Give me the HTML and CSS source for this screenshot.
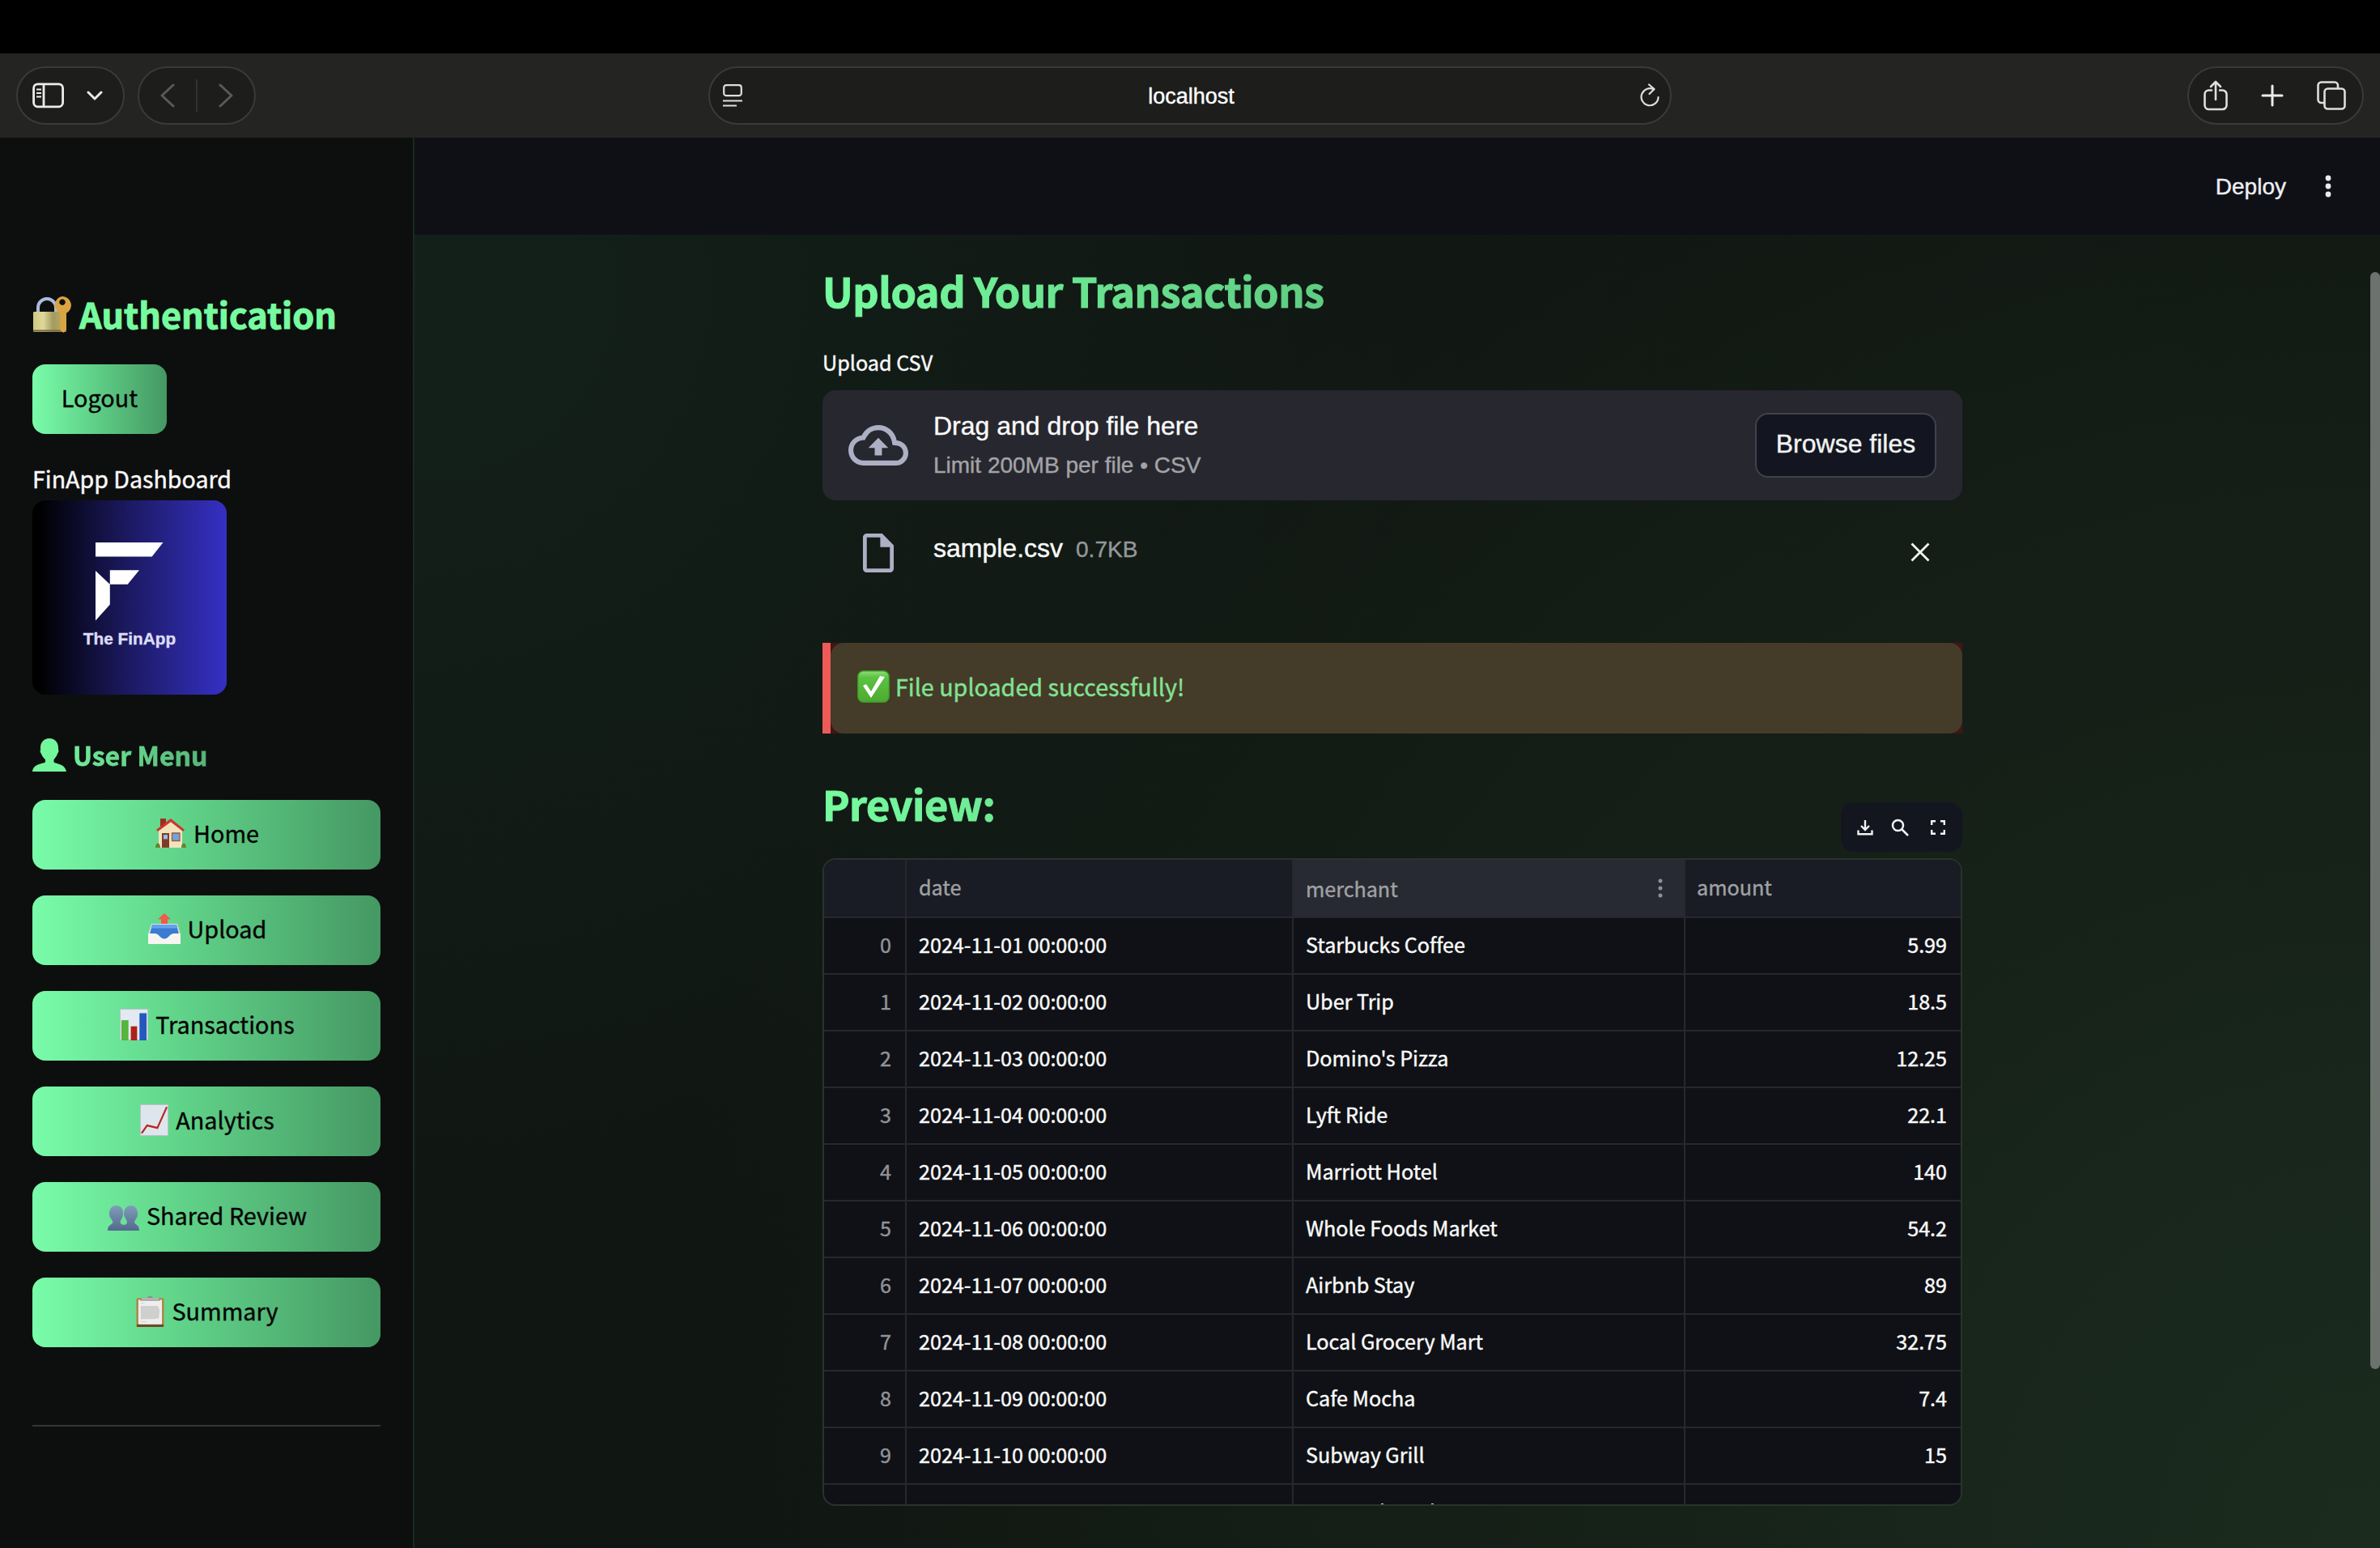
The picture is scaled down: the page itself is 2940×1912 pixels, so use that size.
FILE: index.html
```html
<!DOCTYPE html>
<html lang="en">
<head>
<meta charset="utf-8">
<title>FinApp</title>
<link rel="stylesheet" href="styles.css">
</head>
<body>
<div class="screen-top"></div>
<header class="browser">
  <div class="pill pill-side">
    <svg width="40" height="32" viewBox="0 0 40 32" fill="none" stroke="#ecebea" stroke-width="2.8"><rect x="1.6" y="1.8" width="36" height="28" rx="5"/><path d="M14 2v28"/><path d="M5 8.500h6M5 13h6M5 17.500h6" stroke-width="1.800"/></svg>
    <svg width="20" height="14" viewBox="0 0 20 14" fill="none" stroke="#ecebea" stroke-width="3" stroke-linecap="round" stroke-linejoin="round"><path d="M2 3l8 8 8-8"/></svg>
  </div>
  <div class="pill pill-nav">
    <svg width="18" height="30" viewBox="0 0 18 30" fill="none" stroke="#5a5a58" stroke-width="3" stroke-linecap="round" stroke-linejoin="round"><path d="M16 2L2 15l14 13"/></svg>
    <span class="nav-divider"></span>
    <svg width="18" height="30" viewBox="0 0 18 30" fill="none" stroke="#5a5a58" stroke-width="3" stroke-linecap="round" stroke-linejoin="round"><path d="M2 2l14 13L2 28"/></svg>
  </div>
  <div class="pill address">
    <svg width="24" height="28" viewBox="0 0 24 28" fill="none" stroke="#dededc" stroke-width="2.200"><rect x="1.200" y="1.200" width="21.600" height="13" rx="3"/><path d="M0 20.500h24M0 26.500h17"/></svg>
    <span class="address-text">localhost</span>
    <svg width="24" height="30" viewBox="0 0 24 30" fill="none" stroke="#dededc" stroke-width="2.200" stroke-linecap="round" stroke-linejoin="round"><path d="M17 7.500A10.500 10.500 0 1 0 22.500 17"/><path d="M11 1.500l6.500 5.500-6 6"/></svg>
  </div>
  <div class="pill pill-actions">
    <svg width="30" height="38" viewBox="0 0 30 38" fill="none" stroke="#dededc" stroke-width="2.600" stroke-linecap="round" stroke-linejoin="round"><path d="M10 12.500H6.500a5 5 0 0 0-5 5V31a5 5 0 0 0 5 5h17a5 5 0 0 0 5-5V17.500a5 5 0 0 0-5-5H20M15 24V2M9 8l6-6 6 6"/></svg>
    <svg width="28" height="28" viewBox="0 0 28 28" fill="none" stroke="#ecebea" stroke-width="3" stroke-linecap="round"><path d="M14 2v24M2 14h24"/></svg>
    <svg width="36" height="36" viewBox="0 0 36 36" fill="none" stroke="#dededc" stroke-width="2.600" stroke-linecap="round"><rect x="9.500" y="9.500" width="25" height="25" rx="4"/><path d="M9 27H5.500a4 4 0 0 1-4-4V5.500a4 4 0 0 1 4-4H22a4 4 0 0 1 4 4V9"/></svg>
  </div>
</header>
<div class="app">
  <aside class="sidebar">
    <h2 class="auth"><svg class="auth-icon" width="48" height="46" viewBox="0 0 48 46"><defs><linearGradient id="brass"><stop offset="0" stop-color="#cfc981"/><stop offset=".3" stop-color="#ded89a"/><stop offset=".6" stop-color="#a39a62"/><stop offset="1" stop-color="#c0b060"/></linearGradient></defs><path d="M7 22V14a11 11 0 0 1 22 0v8" fill="none" stroke="#a9bcdc" stroke-width="4"/><rect x="1" y="19" width="41" height="25" rx="1.500" fill="url(#brass)"/><path d="M1 42.500h41" stroke="#77683a" stroke-width="2"/><path d="M37 0a11 11 0 0 1 4.500 21V42l-3 3-4-3V21A11 11 0 0 1 37 0zm0 3.500a3.700 3.700 0 1 0 .01 0z" fill="#d9a441" fill-rule="evenodd"/></svg><span>Authentication</span></h2>
    <button class="btn logout">Logout</button>
    <p class="dash-title">FinApp Dashboard</p>
    <div class="logo">
      <svg width="84" height="97" viewBox="0 0 84 97" fill="#fff"><path d="M0 0h83.500L69.700 17.500H0zM17.800 34.300H54L39.700 51.800H17.800zM0 35l17.800 16.800v25L0 96.500z"/></svg>
      <span class="logo-text">The FinApp</span>
    </div>
    <h3 class="menu-title"><svg width="42" height="42" viewBox="0 0 42 40" preserveAspectRatio="none" fill="#74f79c"><path d="M21 0c7 0 11 5 11 11 0 2 0 2 .4 3 .3 2-1 3-1.400 4-1 3-3 5-4.500 7v3c3 2 14 2 15.500 11H0C1 30 12 30 16 28v-3c-2-2-4-4-5-7-1-1-2-3-1-4V11C10 5 14 0 21 0z"/></svg><span>User Menu</span></h3>
    <nav class="menu">
      <button class="btn"><svg width="38" height="38" viewBox="0 0 38 36" preserveAspectRatio="none"><path d="M6 1h7v11H6z" fill="#9c2d22"/><path d="M4 13L19 3l14 10v22H4z" fill="#f4e2bd"/><path d="M1 14L19 1l17 13-2 2L19 5 3 16z" fill="#c9382f"/><path d="M8 18h9v17H8z" fill="#7e3c25"/><path d="M10 20h5v5h-5z" fill="#8fc4f4"/><path d="M20.500 18h9.500v9h-9.500z" fill="#6fa5e0" stroke="#9a5a38" stroke-width="1.300"/><path d="M0 35c0-7 6-7 6 0zm32 0c0-7 6-7 6 0z" fill="#66842f"/></svg>Home</button>
      <button class="btn"><svg width="40" height="39" viewBox="0 0 40 36" preserveAspectRatio="none"><path d="M20 0l8 7h-4v6h-8V7h-4z" fill="#ee5c4c"/><path d="M4 12h32l4 12v11H0V24z" fill="#d9dfe5"/><path d="M5 13h30l3 11H2z" fill="#3b7bd4"/><path d="M5 13h30l1 4H4z" fill="#66a2ec"/><path d="M0 23h9c4 0 6 6 11 6s7-6 11-6h9v12H0z" fill="#f6f5f2"/><path d="M9 23c4 0 6 6 11 6s7-6 11-6z" fill="#3b7bd4"/></svg>Upload</button>
      <button class="btn"><svg width="35" height="39" viewBox="0 0 36 36" preserveAspectRatio="none"><path d="M.5.5h35v35H.5z" fill="#e3e9f1" stroke="#b7c4cb"/><path d="M2 13h9v23H2z" fill="#55b53c"/><path d="M14 20h8v16h-8z" fill="#ac2219"/><path d="M25 5h9v31h-9z" fill="#2359be"/></svg>Transactions</button>
      <button class="btn"><svg width="35" height="39" viewBox="0 0 36 36" preserveAspectRatio="none"><path d="M.5.500h35v35H.5z" fill="#dfe5ec" stroke="#b7c4cb"/><path d="M2 33l7-9 13 3L34 3" fill="none" stroke="#b5271f" stroke-width="2.200"/></svg>Analytics</button>
      <button class="btn"><svg class="people" width="39" height="32" viewBox="0 0 40 30" preserveAspectRatio="none"><defs><linearGradient id="people" x2="0" y2="1"><stop stop-color="#819dbb"/><stop offset="1" stop-color="#53698d"/></linearGradient></defs><path d="M11 0c6 0 9 4 8.500 10-.5 5-3 6-3.500 9 0 3 3 3 5 3.500 1.500-.5 4-1 3.500-4-.5-3-3-4-4-8C20.500 4 24 0 29.500 0 35 0 38 4 38 10c0 5-3.500 6-4 9 0 4 6 2 6 10H0c0-8 6.500-6 6.500-10-.5-3-4-4-4.500-9C2 4 5 0 11 0z" fill="url(#people)"/></svg>Shared Review</button>
      <button class="btn"><svg width="35" height="39" viewBox="0 0 36 36" preserveAspectRatio="none"><rect x=".5" y="3" width="35" height="33" rx="2" fill="#b1824a"/><path d="M1 33h34v3H1z" fill="#6e4a25"/><path d="M3 5h30v28H3z" fill="#eeeeed"/><path d="M6 12h22l2 5-1 9-6 1H6z" fill="#cfcfce"/><path d="M6 9h5M6 30h8" stroke="#d4d4d3"/><path d="M5 6c1-3 9-2 10-4q3-3 6 0c1 2 9 1 10 4z" fill="#8c8f91"/><path d="M7 4h22" stroke="#dcdfe1"/></svg>Summary</button>
    </nav>
    <hr class="rule">
  </aside>
  <div class="page">
    <div class="toolbar"><span>Deploy</span><svg width="8" height="28" viewBox="0 0 8 28" fill="#e9eaee"><circle cx="4" cy="4" r="3.400"/><circle cx="4" cy="14" r="3.400"/><circle cx="4" cy="24" r="3.400"/></svg></div>
    <main class="content">
      <h2 class="title">Upload Your Transactions</h2>
      <p class="label">Upload CSV</p>
      <div class="dropzone">
        <svg class="cloud" width="74" height="50" viewBox="0 4 24 16" preserveAspectRatio="none" fill="#adb0c4"><path d="M19.350 10.040A7.490 7.490 0 0 0 12 4C9.110 4 6.600 5.640 5.350 8.040A5.994 5.994 0 0 0 0 14c0 3.310 2.690 6 6 6h13c2.760 0 5-2.240 5-5 0-2.640-2.050-4.780-4.650-4.960zM19 18H6c-2.210 0-4-1.790-4-4 0-2.050 1.530-3.760 3.560-3.970l1.070-.11.500-.95A5.469 5.469 0 0 1 12 6c2.620 0 4.880 1.860 5.390 4.430l.3 1.500 1.530.11A2.980 2.980 0 0 1 22 15c0 1.650-1.350 3-3 3zM8 13h2.550v3h2.900v-3H16l-4-4z"/></svg>
        <div class="drop-text"><span class="drop-main">Drag and drop file here</span><span class="drop-sub">Limit 200MB per file • CSV</span></div>
        <button class="browse">Browse files</button>
      </div>
      <div class="file">
        <svg width="38" height="48" viewBox="4 2 16 20" preserveAspectRatio="none" fill="#adb0c4"><path d="M14 2H6c-1.100 0-2 .9-2 2v16c0 1.100.9 2 2 2h12c1.100 0 2-.9 2-2V8zM6 20V4h7v5h5v11z"/></svg>
        <span class="file-name">sample.csv</span><span class="file-size">0.7KB</span>
        <svg class="close" width="24" height="24" viewBox="0 0 24 24" stroke="#f1f3f2" stroke-width="2.800"><path d="M1.500 1.500l21 21M22.500 1.500l-21 21"/></svg>
      </div>
      <div class="alert"><div class="alert-body">
        <svg width="40" height="40" viewBox="0 0 40 40"><defs><linearGradient id="tick" x2="0" y2="1"><stop stop-color="#8fe07a"/><stop offset=".2" stop-color="#5cc342"/><stop offset="1" stop-color="#4caa30"/></linearGradient></defs><rect x=".7" y=".7" width="38.600" height="38.600" rx="7" fill="url(#tick)" stroke="#3f9427" stroke-width="1.400"/><path d="M7 19l4-2 6 9L28 7l6 1-17 26z" fill="#fff"/></svg>
        <span>File uploaded successfully!</span></div></div>
      <div class="preview-head">
        <h2 class="title">Preview:</h2>
        <div class="tools">
          <svg width="20" height="20" viewBox="0 0 20 20" fill="none" stroke="#f2f3f5" stroke-width="2.400"><path d="M10 1v11M5 8l5 5 5-5M1.500 13.500v4.800h17v-4.800"/></svg>
          <svg width="22" height="22" viewBox="0 0 22 22" fill="none" stroke="#f2f3f5" stroke-width="2.500"><circle cx="8.500" cy="8.500" r="6.500"/><path d="M13 13l8 8"/></svg>
          <svg class="expand" width="18" height="18" viewBox="0 0 18 18" fill="none" stroke="#f2f3f5" stroke-width="2.400"><path d="M1.200 6V1.200H6M12 1.200h4.800V6M16.800 12v4.800H12M6 16.800H1.200V12"/></svg>
        </div>
      </div>
      <div class="table">
        <div class="row head"><span></span><span>date</span><span class="hover">merchant<svg width="6" height="24" viewBox="0 0 6 24" fill="#8d9096"><circle cx="3" cy="3" r="2.500"/><circle cx="3" cy="12" r="2.500"/><circle cx="3" cy="21" r="2.500"/></svg></span><span>amount</span></div>
        <div class="row"><span>0</span><span>2024-11-01 00:00:00</span><span>Starbucks Coffee</span><span>5.99</span></div>
        <div class="row"><span>1</span><span>2024-11-02 00:00:00</span><span>Uber Trip</span><span>18.5</span></div>
        <div class="row"><span>2</span><span>2024-11-03 00:00:00</span><span>Domino's Pizza</span><span>12.25</span></div>
        <div class="row"><span>3</span><span>2024-11-04 00:00:00</span><span>Lyft Ride</span><span>22.1</span></div>
        <div class="row"><span>4</span><span>2024-11-05 00:00:00</span><span>Marriott Hotel</span><span>140</span></div>
        <div class="row"><span>5</span><span>2024-11-06 00:00:00</span><span>Whole Foods Market</span><span>54.2</span></div>
        <div class="row"><span>6</span><span>2024-11-07 00:00:00</span><span>Airbnb Stay</span><span>89</span></div>
        <div class="row"><span>7</span><span>2024-11-08 00:00:00</span><span>Local Grocery Mart</span><span>32.75</span></div>
        <div class="row"><span>8</span><span>2024-11-09 00:00:00</span><span>Cafe Mocha</span><span>7.4</span></div>
        <div class="row"><span>9</span><span>2024-11-10 00:00:00</span><span>Subway Grill</span><span>15</span></div>
        <div class="row cut"><span></span><span></span><span><svg width="160" height="4" viewBox="0 0 160 4" fill="#d8d8da"><path d="M84 2h3v2h-3zM93 1h3v3h-3zM155 1h3v3h-3z"/></svg></span><span></span></div>
      </div>
    </main>
    <div class="scrollbar"></div>
  </div>
</div>
</body>
</html>
```

FILE: styles.css
```css
* { box-sizing: border-box; margin: 0; padding: 0; }
html, body { width: 2940px; height: 1912px; overflow: hidden; background: #000; }
body { font-family: "Noto Sans CJK JP", sans-serif; color: #fafafa; display: flex; flex-direction: column; -webkit-text-stroke-width: .4px; }
svg { display: block; flex: none; }
button { font: inherit; border: 0; }

.screen-top { height: 66px; flex: none; }
.browser { height: 104px; flex: none; background: #242422; display: flex; align-items: center; padding: 0 20px; }
.pill { height: 72px; border: 2px solid #3a3a38; border-radius: 36px; background: #1d1d1b; display: flex; align-items: center; flex: none; }
.pill-side { width: 134px; padding: 0 25px 0 18px; justify-content: space-between; }
.pill-nav { width: 146px; margin-left: 16px; padding: 0 26px; justify-content: space-between; }
.nav-divider { width: 2px; height: 40px; background: #323230; }
.address { width: 1190px; margin-left: 559px; padding: 0 13px 0 16px; justify-content: space-between; }
.address-text { font: 27px "Liberation Sans", sans-serif; color: #fff; padding-top: 2px; }
.pill-actions { width: 218px; margin-left: auto; padding: 0 20px 0 18px; justify-content: space-between; }

.app { flex: 1; min-height: 0; display: flex; }
.sidebar { width: 512px; flex: none; background: #0d0f0e; border-right: 2px solid #1a2a20; padding: 187px 40px 0; display: flex; flex-direction: column; }
.auth { height: 64px; display: flex; align-items: center; gap: 10px; color: #76fb9e; font-size: 43.200px; line-height: 64px; font-weight: 700; -webkit-text-stroke-width: 1px; }
.auth span { padding-bottom: 5px; }
.btn { height: 86px; width: 100%; border-radius: 16px; background: linear-gradient(90deg, #79fcaa, #62d68b 40%, #459863); color: #050505; font-size: 28.800px; line-height: 40px; display: flex; align-items: center; justify-content: center; gap: 9px; padding: 0 0 4px 2px; }
.logout { width: 166px; margin-top: 29px; flex: none; padding-left: 0; }
.people { margin-top: 8px; }
.dash-title { font-size: 28.600px; line-height: 40px; margin-top: 35px; }
.logo { width: 240px; height: 240px; flex: none; margin-top: 7px; border-radius: 16px; background: linear-gradient(90deg, #000 3%, #1c1a62 50%, #3530c4); display: flex; flex-direction: column; align-items: center; padding-top: 52px; }
.logo-text { font: 700 20.800px/24px "Liberation Sans", sans-serif; color: #dcdcf5; margin-top: 10px; }
.menu-title { display: flex; align-items: center; gap: 8px; margin-top: 50px; height: 50px; font-size: 32.100px; line-height: 48px; font-weight: 700; -webkit-text-stroke-width: .8px; }
.menu-title span { padding-bottom: 2px; background: linear-gradient(90deg, #70ec98, #55b577); -webkit-background-clip: text; background-clip: text; color: transparent; }
.menu { margin-top: 30px; display: flex; flex-direction: column; gap: 32px; }
.rule { border: 0; height: 2px; background: #343635; margin-top: 96px; flex: none; }

.page { flex: 1; position: relative; display: flex; flex-direction: column; background: radial-gradient(circle at 100% 100%, #1b2c1e 0%, #151f17 38%, rgba(17,22,19,0) 72%), radial-gradient(circle at 0% 10%, #13201a 0%, #101612 45%, #0f1311 100%); }
.toolbar { height: 120px; flex: none; background: #0f1016; display: flex; align-items: center; justify-content: flex-end; gap: 48px; padding-right: 60px; font: 28px "Liberation Sans", sans-serif; color: #eef0f4; }
.toolbar span { padding-top: 1px; }
.content { width: 1408px; margin-left: 504px; padding-top: 36px; display: flex; flex-direction: column; }
.title { width: 100%; height: 72px; font-size: 50.400px; line-height: 66px; font-weight: 700; letter-spacing: -.5px; background: linear-gradient(90deg, #76fb9e, #429260); -webkit-background-clip: text; background-clip: text; color: transparent; -webkit-text-stroke-width: 1.200px; }
.label { font-size: 25.200px; line-height: 40px; margin-top: 29px; }
.dropzone { height: 136px; margin-top: 15px; border-radius: 16px; background: #27272f; display: flex; align-items: center; padding: 0 32px; }
.drop-text { margin-left: 31px; display: flex; flex-direction: column; font-family: "Liberation Sans", sans-serif; }
.drop-main { font-size: 32px; line-height: 50px; }
.drop-sub { font-size: 28px; line-height: 48px; color: #a3a3a6; }
.browse { width: 224px; height: 80px; margin-left: auto; padding-bottom: 3px; border: 2px solid #41424a; border-radius: 16px; background: #131620; color: #f1f3f2; font: 32px "Liberation Sans", sans-serif; }
.file { height: 50px; margin-top: 40px; display: flex; align-items: center; padding: 0 40px 0 50px; font-family: "Liberation Sans", sans-serif; }
.file-name { margin-left: 49px; font-size: 32px; margin-bottom: 11px; }
.file-size { margin-left: 16px; font-size: 28px; color: #94989a; margin-bottom: 9px; }
.close { margin: 0 0 2px auto; }
.alert { height: 112px; margin-top: 86px; border-left: 10px solid #ee5a57; background: #421616; }
.alert-body { height: 112px; border-radius: 16px; background: #453b29; display: flex; align-items: center; gap: 7px; padding: 0 0 4px 33px; font-size: 28.700px; line-height: 40px; color: #82e392; }
.preview-head { position: relative; display: flex; align-items: flex-end; height: 143px; }
.preview-head .title { flex: 1; margin-bottom: 17px; }
.tools { position: absolute; right: 0; bottom: -3px; width: 150px; height: 61px; border-radius: 16px; background: #13161f; display: flex; align-items: center; gap: 22px; padding: 0 21px 0 20px; }
.expand { margin-left: auto; }
.table { height: 800px; margin-top: 11px; border: 2px solid #29332c; border-radius: 16px; background: #0f1116; overflow: hidden; font-size: 25.200px; letter-spacing: -.04px; }
.row { display: grid; grid-template-columns: 102px 478px 484px 1fr; height: 70px; border-bottom: 2px solid #27282d; line-height: 64px; }
.row span { border-right: 2px solid #27282d; padding: 0 15px; }
.row span:last-child { border-right: 0; padding-right: 17px; }
.row span:first-child, .row span:last-child { text-align: right; }
.row span:first-child { color: #929397; padding-right: 17px; }
.row.head { height: 72px; line-height: 67px; background: #191c24; color: #a0a1a4; }
.row.head span { text-align: left; }
.row.head span:last-child { padding-left: 14px; }
.row .hover { display: flex; align-items: center; justify-content: space-between; background: #272a32; padding-right: 26px; }
.row.cut { border: 0; height: 24px; }
.row.cut svg { margin: 22px 0 0 0; }
.scrollbar { position: absolute; right: 0; top: 166px; width: 12px; height: 1355px; border-radius: 6px; background: #6c736e; }
```
